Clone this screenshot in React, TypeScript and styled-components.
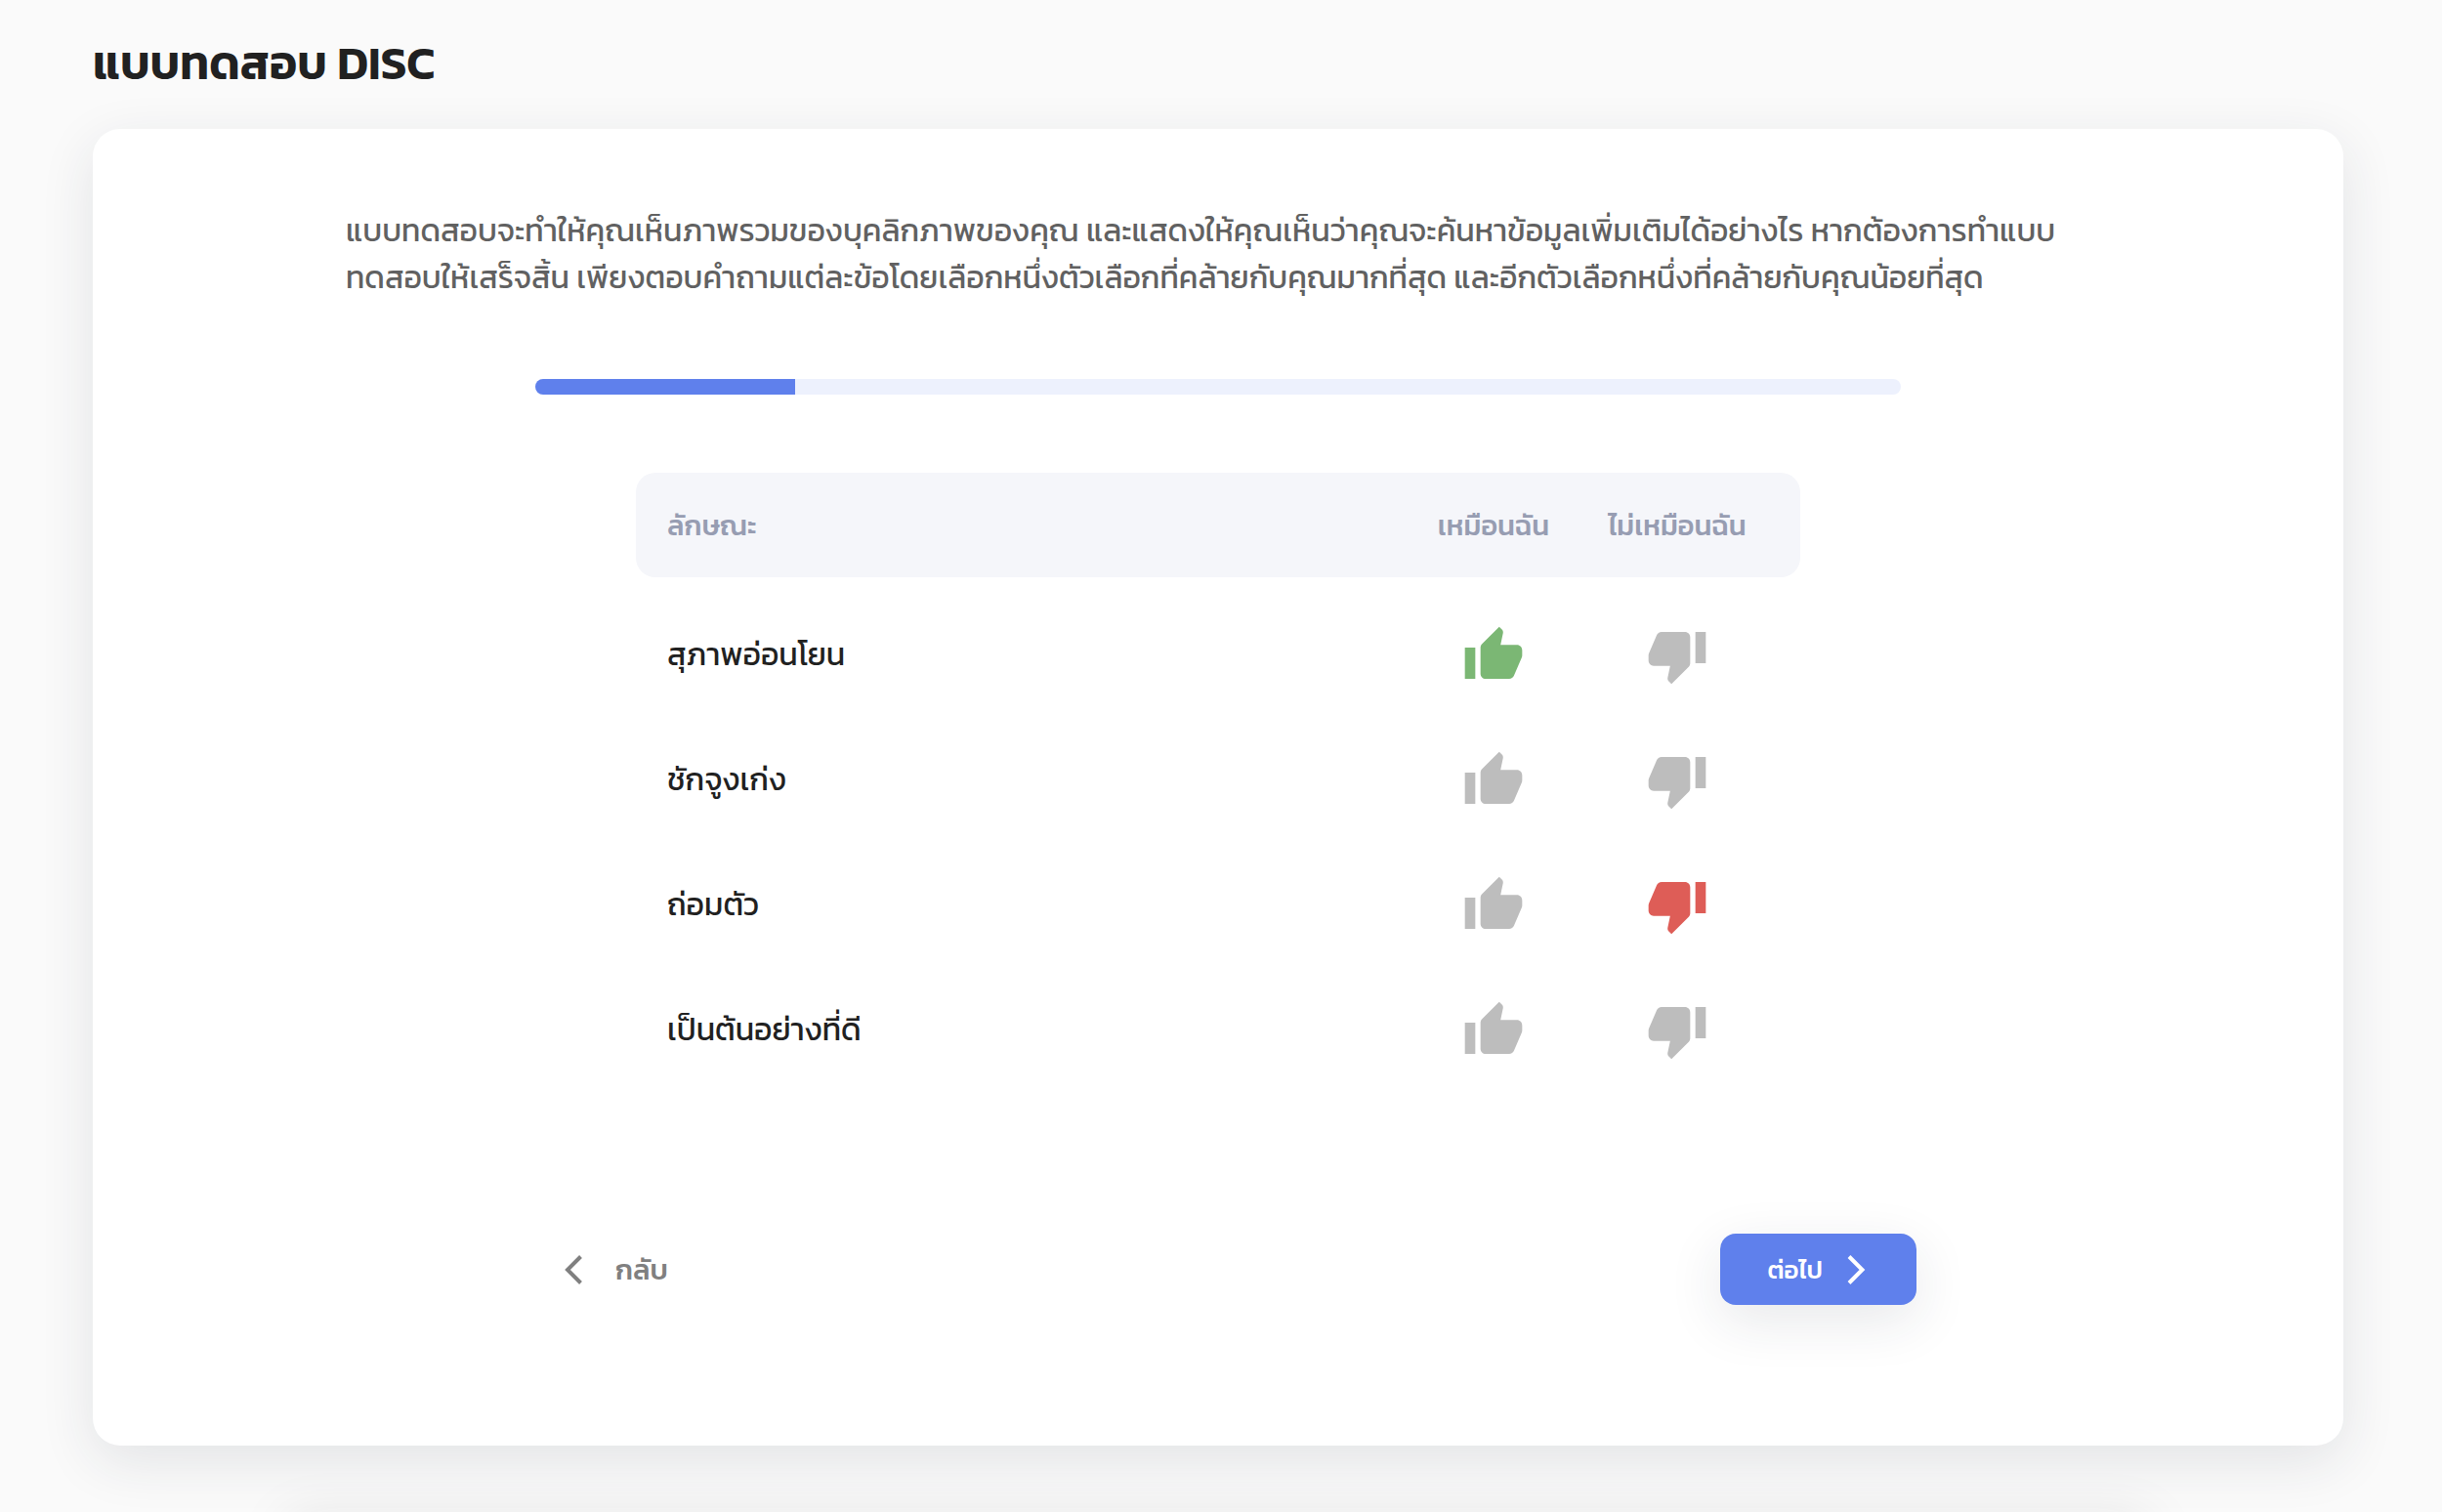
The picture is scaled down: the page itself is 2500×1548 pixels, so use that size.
import React, { useState } from "react";
import styled, { createGlobalStyle } from "styled-components";

const GlobalStyle = createGlobalStyle`
  *, *::before, *::after { box-sizing: border-box; }
  body {
    margin: 0;
    background: #fafafa;
    color: #212121;
    font-family: Kanit, "Noto Sans Thai", "Noto Sans", sans-serif;
  }
  button { font-family: inherit; }
`;

const Page = styled.main`
  display: flex;
  flex-direction: column;
  min-height: 100vh;
  padding: 30px 101px 0 95px;
  overflow: hidden;
`;

const Title = styled.h1`
  margin: 0 0 34px;
  font-size: 48px;
  line-height: 68px;
  font-weight: 600;
`;

const Card = styled.section`
  display: flex;
  flex-direction: column;
  align-items: center;
  padding: 80px 64px 144px;
  border-radius: 28px;
  background: #fff;
  box-shadow: 0 16px 56px rgba(33, 43, 64, 0.11);
`;

const BottomShade = styled.div`
  margin: auto 240px 0;
  box-shadow: 0 48px 56px 40px rgba(33, 33, 33, 0.1);
`;

const Intro = styled.p`
  width: 100%;
  max-width: 1786px;
  margin: 0 0 48px;
  color: #616161;
  font-size: 32px;
  line-height: 48px;
`;

const Track = styled.div`
  width: 100%;
  max-width: 1398px;
  height: 16px;
  margin: 32px 0 80px;
  border-radius: 8px;
  overflow: hidden;
  background: #edf1fd;
`;

const Fill = styled.div<{ $percent: number }>`
  width: ${(p) => p.$percent}%;
  height: 100%;
  background: #5f80ec;
`;

const Table = styled.table`
  width: 100%;
  max-width: 1192px;
  border-spacing: 0;
  table-layout: fixed;
`;

const HeadCell = styled.th<{ $width?: number }>`
  width: ${(p) => (p.$width ? `${p.$width}px` : "auto")};
  height: 107px;
  padding: 0;
  background: #f5f6fa;
  color: #979db2;
  font-size: 29px;
  font-weight: 500;
  text-align: center;
  white-space: nowrap;
  &:first-child { padding-left: 32px; border-radius: 20px 0 0 20px; text-align: left; }
  &:last-child { padding-right: 32px; border-radius: 0 20px 20px 0; }
`;

const SpacerRow = styled.tr`
  height: 16px;
`;

const TraitCell = styled.th`
  height: 128px;
  padding: 0 0 2px 32px;
  font-size: 32px;
  font-weight: 400;
  text-align: left;
`;

const VoteCell = styled.td`
  padding: 0;
  text-align: center;
  &:last-child { padding-right: 32px; }
`;

const VoteButton = styled.button<{ $color: string }>`
  display: inline-flex;
  padding: 0;
  border: 0;
  background: none;
  color: ${(p) => p.$color};
  cursor: pointer;
  vertical-align: middle;
`;

const Actions = styled.nav`
  display: flex;
  justify-content: space-between;
  width: 100%;
  max-width: 1430px;
  margin-top: 144px;
`;

const ActionButton = styled.button<{ $primary?: boolean }>`
  display: flex;
  align-items: center;
  gap: ${(p) => (p.$primary ? 16 : 24)}px;
  height: 73px;
  padding: ${(p) => (p.$primary ? "0 44px 0 48px" : "0 38px")};
  border: 0;
  border-radius: 16px;
  background: ${(p) => (p.$primary ? "#5f80ec" : "none")};
  color: ${(p) => (p.$primary ? "#fff" : "#808080")};
  box-shadow: ${(p) => (p.$primary ? "0 16px 56px rgba(33, 43, 64, 0.11)" : "none")};
  font-size: ${(p) => (p.$primary ? 26 : 29)}px;
  font-weight: 500;
  cursor: pointer;
`;

const UP = "M1 21h4V9H1v12zm22-11c0-1.100-.9-2-2-2h-6.310l.950-4.570.030-.320c0-.410-.170-.790-.440-1.060L14.170 1 7.590 7.590C7.220 7.950 7 8.450 7 9v10c0 1.100.9 2 2 2h9c.830 0 1.540-.500 1.840-1.220l3.020-7.050c.090-.230.140-.470.140-.730v-2z";
const DOWN = "M15 3H6c-.830 0-1.540.500-1.840 1.220l-3.020 7.050c-.090.230-.140.470-.140.730v2c0 1.100.9 2 2 2h6.310l-.950 4.570-.030.320c0 .410.170.790.440 1.060L9.830 23l6.590-6.590c.360-.360.580-.860.580-1.410V5c0-1.100-.9-2-2-2zm4 0v12h4V3h-4z";

const Thumb = ({ up }: { up: boolean }) => (
  <svg width="64" height="64" viewBox="0 0 24 24" fill="currentColor" aria-hidden="true">
    <path d={up ? UP : DOWN} />
  </svg>
);

const Chevron = ({ left }: { left?: boolean }) => (
  <svg width="36" height="36" viewBox="0 0 36 36" fill="none" stroke="currentColor" strokeWidth="4" aria-hidden="true">
    <path d={left ? "M24.500 4.500 11 18 24.500 31.500" : "M11 4.500 24.500 18 11 31.500"} />
  </svg>
);

const traits = ["สุภาพอ่อนโยน", "ชักจูงเก่ง", "ถ่อมตัว", "เป็นต้นอย่างที่ดี"];

export default function App() {
  const [most, setMost] = useState(0);
  const [least, setLeast] = useState(2);

  return (
    <>
      <GlobalStyle />
      <Page>
        <Title>แบบทดสอบ DISC</Title>
        <Card>
          <Intro>
            แบบทดสอบจะทำให้คุณเห็นภาพรวมของบุคลิกภาพของคุณ และแสดงให้คุณเห็นว่าคุณจะค้นหาข้อมูลเพิ่มเติมได้อย่างไร หากต้องการทำแบบ
            <br />
            ทดสอบให้เสร็จสิ้น เพียงตอบคำถามแต่ละข้อโดยเลือกหนึ่งตัวเลือกที่คล้ายกับคุณมากที่สุด และอีกตัวเลือกหนึ่งที่คล้ายกับคุณน้อยที่สุด
          </Intro>
          <Track role="progressbar" aria-valuenow={19} aria-valuemin={0} aria-valuemax={100}>
            <Fill $percent={19} />
          </Track>
          <Table>
            <thead>
              <tr>
                <HeadCell scope="col">ลักษณะ</HeadCell>
                <HeadCell scope="col" $width={188}>เหมือนฉัน</HeadCell>
                <HeadCell scope="col" $width={220}>ไม่เหมือนฉัน</HeadCell>
              </tr>
            </thead>
            <tbody>
              <SpacerRow />
              {traits.map((trait, i) => (
                <tr key={trait}>
                  <TraitCell scope="row">{trait}</TraitCell>
                  <VoteCell>
                    <VoteButton
                      type="button"
                      aria-label={`เหมือนฉัน ${trait}`}
                      aria-pressed={most === i}
                      $color={most === i ? "#7bb774" : "#bdbdbd"}
                      onClick={() => setMost(i)}
                    >
                      <Thumb up />
                    </VoteButton>
                  </VoteCell>
                  <VoteCell>
                    <VoteButton
                      type="button"
                      aria-label={`ไม่เหมือนฉัน ${trait}`}
                      aria-pressed={least === i}
                      $color={least === i ? "#de5d57" : "#bdbdbd"}
                      onClick={() => setLeast(i)}
                    >
                      <Thumb up={false} />
                    </VoteButton>
                  </VoteCell>
                </tr>
              ))}
            </tbody>
          </Table>
          <Actions>
            <ActionButton type="button">
              <Chevron left />
              กลับ
            </ActionButton>
            <ActionButton type="button" $primary>
              ต่อไป
              <Chevron />
            </ActionButton>
          </Actions>
        </Card>
        <BottomShade />
      </Page>
    </>
  );
}
